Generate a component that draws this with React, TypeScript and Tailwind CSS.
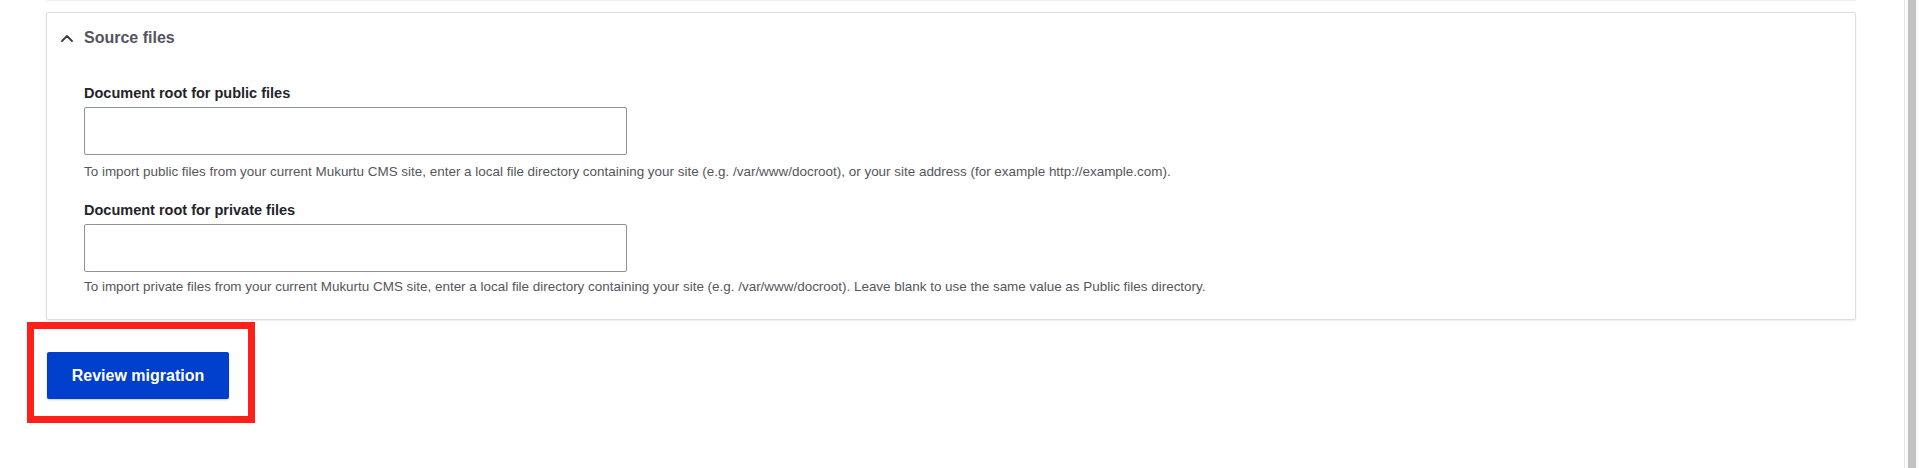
import React from "react";

export default function App() {
  const font = { fontFamily: '"Liberation Sans", Arial, sans-serif' };
  return (
    <div className="flex h-[468px] w-full overflow-hidden bg-white" style={font}>
      <div className="flex min-w-0 flex-1 flex-col">
        <div className="pl-[47px] pr-[48px]">
          <div className="h-px bg-[#efeff0]" />
        </div>
        <div className="pl-[46px] pr-[48px] pt-[11px]">
          <div className="rounded-[2px] border border-[#dcdde1] bg-white shadow-[0_1px_2px_rgba(0,0,0,0.08)]">
            <div className="flex h-[50px] items-center pl-[14px]">
              <svg width="12" height="8" viewBox="0 0 12 8" className="mr-[11px]">
                <polyline points="1,7 6,2 11,7" fill="none" stroke="#3b3c42" strokeWidth="1.8" strokeLinecap="round" strokeLinejoin="round" />
              </svg>
              <span className="text-[16px] font-bold text-[#545560]">Source files</span>
            </div>
            <div className="pl-[37px] pb-[23px] pt-[20px]">
              <div className="text-[14.5px] font-bold leading-[20px] text-[#232429]">Document root for public files</div>
              <div className="mt-[4px] h-[48px] w-[543px] rounded-[2px] border border-[#8e929c] bg-white" />
              <div className="mt-[7px] text-[13.45px] leading-[19px] text-[#55565b]">
                To import public files from your current Mukurtu CMS site, enter a local file directory containing your site (e.g. /var/www/docroot), or your site address (for example http://example.com).
              </div>
              <div className="mt-[19px] text-[14.5px] font-bold leading-[20px] text-[#232429]">Document root for private files</div>
              <div className="mt-[4px] h-[48px] w-[543px] rounded-[2px] border border-[#8e929c] bg-white" />
              <div className="mt-[5px] text-[13.45px] leading-[19px] text-[#55565b]">
                To import private files from your current Mukurtu CMS site, enter a local file directory containing your site (e.g. /var/www/docroot). Leave blank to use the same value as Public files directory.
              </div>
            </div>
          </div>
        </div>
        <div className="ml-[27px] mt-[2px] w-[228px] border-[7px] border-[#ff1f1a] pl-[13px] pr-[19px] pb-[17px] pt-[23px]">
          <button className="flex h-[47px] w-[182px] items-center justify-center rounded-[2px] bg-[#003ecc] text-[16px] font-bold text-white shadow-[0_1px_2px_rgba(0,0,0,0.2)]">
            Review migration
          </button>
        </div>
      </div>
      <div className="flex w-[15px] shrink-0 border-l border-[#e6e6e6] bg-[#fafafa] pl-[3px] pr-[3px]">
        <div className="w-[8px] bg-[#c2c2c2]" />
      </div>
    </div>
  );
}
